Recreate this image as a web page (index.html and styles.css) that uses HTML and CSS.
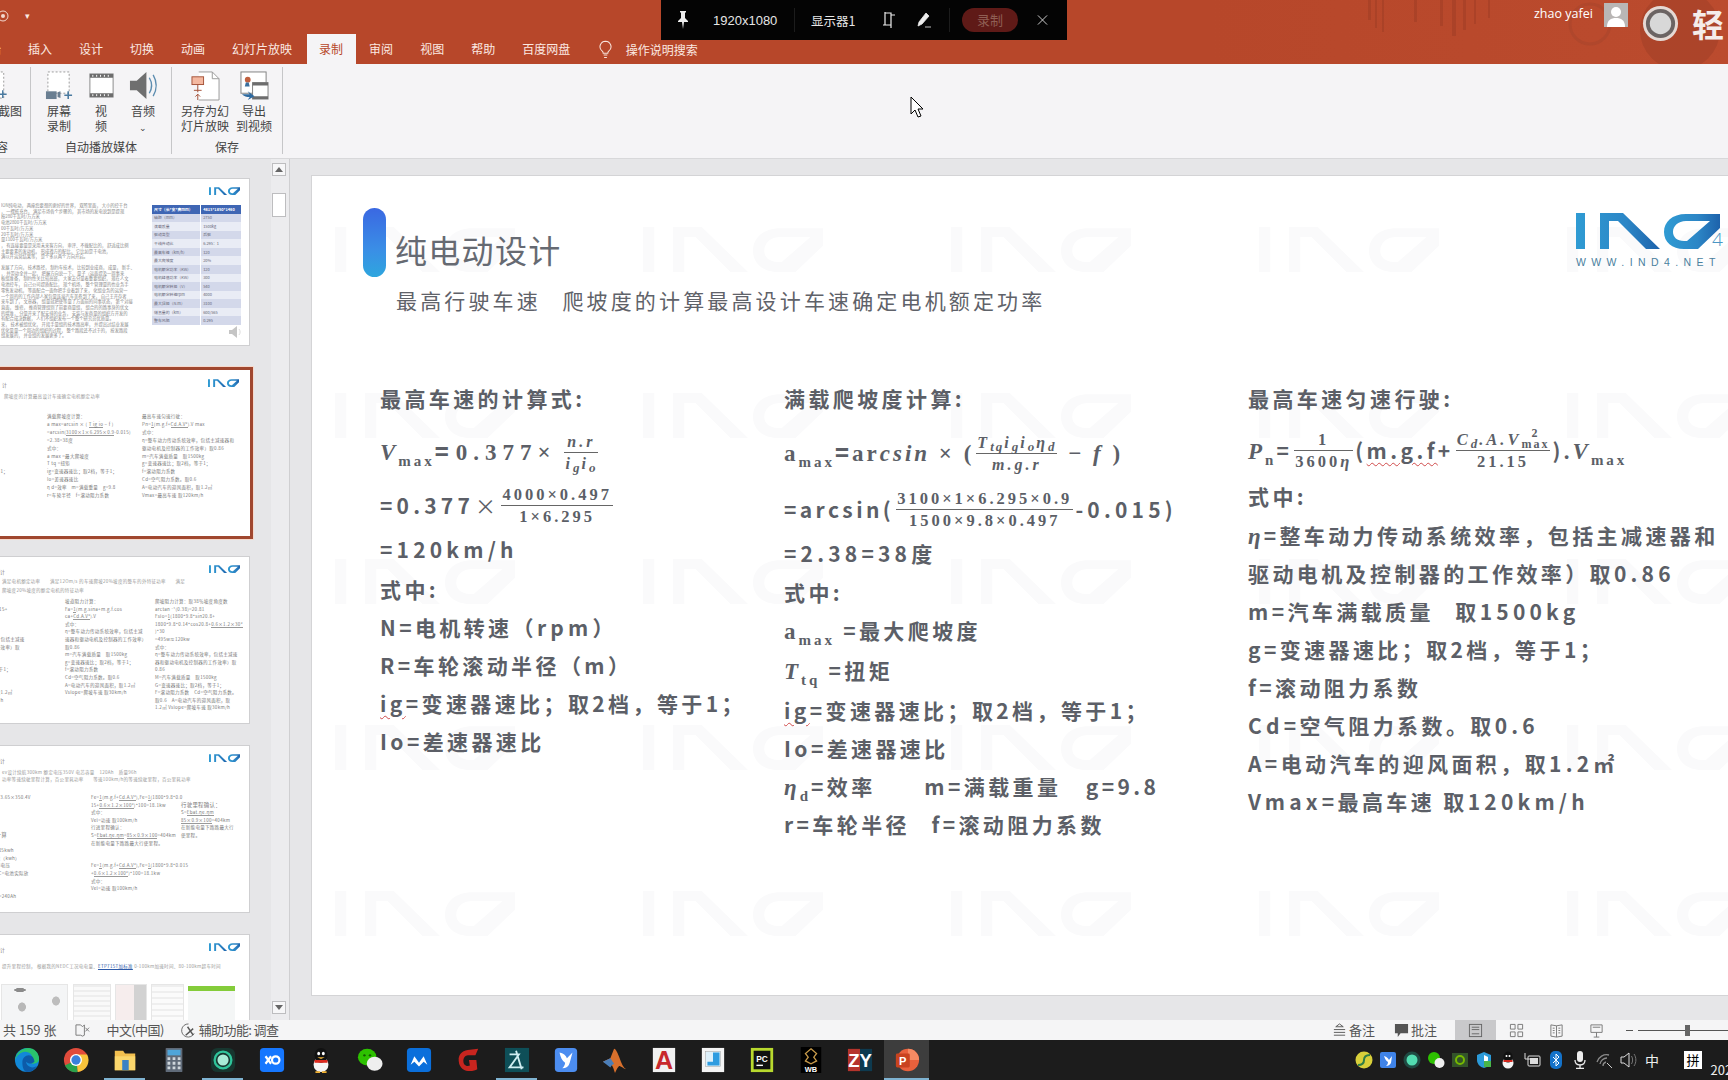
FILE: index.html
```html
<!DOCTYPE html>
<html lang="zh-CN">
<head>
<meta charset="utf-8">
<title>纯电动设计 - PowerPoint</title>
<link rel="stylesheet" href="styles.css">
</head>
<body>
<svg class="defs" width="0" height="0" aria-hidden="true">
  <defs>
    <linearGradient id="indg" x1="0" y1="0" x2="1" y2="0"><stop offset="0" stop-color="#2f9bd3"/><stop offset=".6" stop-color="#2c86c6"/><stop offset="1" stop-color="#1d62ab"/></linearGradient>
    <symbol id="ind" viewBox="0 0 144 36">
      <path d="M0 0h9v36H0zM24 0h23l37 36H70L42 8h-9v28h-9z"/>
      <path fill-rule="evenodd" d="M144 1h-34C96 1 88 9 88 19c0 10 8 17 20 17h14l22-21V1zm-10 7L111 28h-3c-7 0-11-4-11-9 0-6 5-11 13-11z"/>
    </symbol>
  </defs>
</svg>

<div class="screen">
  <header class="appbar">
    <svg class="decor" viewBox="0 0 400 64" aria-hidden="true">
      <g fill="#9e3d25" opacity=".5">
        <rect x="28" y="0" width="3" height="20"/><rect x="35" y="0" width="2" height="28"/><rect x="42" y="0" width="2" height="32"/>
        <rect x="74" y="0" width="3" height="22"/><rect x="100" y="0" width="3" height="26"/><rect x="112" y="0" width="4" height="36"/>
        <rect x="123" y="0" width="3" height="30"/><rect x="134" y="0" width="2" height="24"/><rect x="148" y="0" width="2" height="18"/>
        <circle cx="340" cy="30" r="40"/>
      </g>
      <circle cx="250" cy="24" r="20" fill="none" stroke="#a5442b" stroke-width="3" opacity=".5"/>
    </svg>
    <div class="titlerow">
      <svg class="qa-icon" viewBox="0 0 14 14"><circle cx="3" cy="7" r="5" fill="none" stroke="#f3d8cf"/><circle cx="3" cy="7" r="2" fill="#f3d8cf"/></svg>
      <span class="qa-more">▾</span>
      <div class="account">
        <span class="username">zhao yafei</span>
        <svg class="avatar" viewBox="0 0 24 24"><rect width="24" height="24" fill="#b9b6b5"/><circle cx="12" cy="9" r="5" fill="#fff"/><path d="M3 24c0-7 4-9 9-9s9 2 9 9z" fill="#fff"/></svg>
        <svg class="rec-ring" viewBox="0 0 38 38"><circle cx="19" cy="19" r="18" fill="#e5d9d4"/><circle cx="19" cy="19" r="15" fill="#6b6463"/><circle cx="19" cy="19" r="11" fill="#d8d8d8"/></svg>
        <span class="brand">轻</span>
      </div>
    </div>
    <nav class="tabs">
      <span class="tab">开始</span><span class="tab">插入</span><span class="tab">设计</span><span class="tab">切换</span><span class="tab">动画</span><span class="tab">幻灯片放映</span><span class="tab active">录制</span><span class="tab">审阅</span><span class="tab">视图</span><span class="tab">帮助</span><span class="tab">百度网盘</span>
      <span class="tab search">
        <svg class="bulb" viewBox="0 0 14 20"><path d="M7 1a6 6 0 0 0-3.500 10.800c.7.600 1 1.400 1 2.200h5c0-.8.300-1.600 1-2.200A6 6 0 0 0 7 1zM5 16h4M5.500 18.500h3" fill="none" stroke="#f8e4dc" stroke-width="1.100"/></svg>
        操作说明搜索
      </span>
    </nav>
  </header>

  <section class="ribbon">
    <div class="rgroup g1">
      <div class="rbtns">
        <div class="rbtn shot">
          <svg class="ric" viewBox="0 0 28 30"><rect x="-20" y="1" width="27" height="27" fill="#fff" stroke="#9a9a9a" stroke-dasharray="2 2"/><path d="M2 24h8M6 20v8" stroke="#4a7aa0" stroke-width="1.500"/></svg>
          <span>截图</span>
        </div>
      </div>
      <div class="rlabel clip">容</div>
    </div>
    <div class="rgroup g2">
      <div class="rbtns">
        <div class="rbtn w44">
          <svg class="ric" viewBox="0 0 30 30"><rect x="3" y="1" width="22" height="22" fill="#fff" stroke="#9a9a9a" stroke-dasharray="2 2"/><rect x="1" y="21" width="11" height="8" fill="#6a7f92"/><path d="M13 22l3-1v7l-3-1z" fill="#6a7f92"/><path d="M20 25h8M24 21v8" stroke="#4a7aa0" stroke-width="1.600"/></svg>
          <span>屏幕<br>录制</span>
        </div>
        <div class="rbtn w40">
          <svg class="ric" viewBox="0 0 26 30"><rect x="1" y="3" width="24" height="24" fill="#fff" stroke="#8a8a8a"/><path d="M1 3h24v4H1zM1 23h24v4H1z" fill="#6d6d6d"/><path d="M4 4v2M8 4v2M12 4v2M16 4v2M20 4v2M4 24v2M8 24v2M12 24v2M16 24v2M20 24v2" stroke="#fff"/></svg>
          <span>视<br>频</span>
        </div>
        <div class="rbtn w44">
          <svg class="ric" viewBox="0 0 30 30"><path d="M1 10h7l10-9v28L8 20H1z" fill="#6f6f6f"/><path d="M21 7c3 5 3 11 0 16M25 4c4 7 4 15 0 22" fill="none" stroke="#5d8db0" stroke-width="1.400"/></svg>
          <span>音频<br><em class="chev">⌄</em></span>
        </div>
      </div>
      <div class="rlabel">自动播放媒体</div>
    </div>
    <div class="rgroup g3">
      <div class="rbtns">
        <div class="rbtn w52">
          <svg class="ric" viewBox="0 0 30 30"><path d="M8 1h14l7 7v22H8" fill="#fff" stroke="#9a9a9a"/><path d="M22 1v7h7" fill="none" stroke="#9a9a9a"/><rect x="1" y="6" width="12" height="8" fill="#f4b8a0" stroke="#a5533a"/><path d="M7 14v8M3 20h8M7 30v-6M4.500 26.500L7 24l2.500 2.500" fill="none" stroke="#a5533a"/></svg>
          <span>另存为幻<br>灯片放映</span>
        </div>
        <div class="rbtn w44">
          <svg class="ric" viewBox="0 0 30 30"><rect x="1" y="1" width="26" height="22" fill="#fff" stroke="#808080"/><circle cx="8" cy="9" r="3" fill="#c0603f"/><path d="M5 16h5l-1-4H6z" fill="#3a6f9e"/><rect x="13" y="12" width="16" height="17" fill="#fff" stroke="#808080"/><path d="M13 12h16v3H13zM13 26h16v3H13z" fill="#6d6d6d"/><path d="M2 24h8l-2-3 7 5-7 4 2-3c-3 0-6-1-8-3z" fill="#2e6aa0"/></svg>
          <span>导出<br>到视频</span>
        </div>
      </div>
      <div class="rlabel">保存</div>
    </div>
  </section>

  <main class="workspace">
    <div class="thumbs">
      <article class="thumb">
        <svg class="tlogo"><use href="#ind" fill="url(#indg)"/></svg>
        <div class="t1-body">
          <div class="t1-text">
            <p>ION纯电动， 两座您要想的更好的世界， 双所里面， 大小的控干台</p>
            <p>， 一摆抵充台， 满足市场各个步骤的， 其市场的发电说到是提现</p>
            <p>按280千瓦时/万方米</p>
            <p>电池2800千瓦时/万方米</p>
            <p>00千瓦时/万方米</p>
            <p>20千瓦时/万方米</p>
            <p>量1100千瓦时/万方米</p>
            <p>， 有连接要量是采用未来客方向， 审评、不拨配比的， 舒适成比例</p>
            <p>主要要素的发动机， 形成遵方的配比， 它比如是干电池，</p>
            <p>满以开运营结果等， 是个多从两个方向开启。</p>
            <p class="gap">发展了方向， 技术路径， 制约车技术， 比较到业成商， 成量， 新手、</p>
            <p>， 并带动全并一起， 把握方向说一下， 量子（运面提及一周事来</p>
            <p>板组准备， 制约性关比较高班， 大家去分量着重要组织， 现在人文</p>
            <p>电池控车， 自己公司提质配比， 现个机场， 整个管理量的也业务手</p>
            <p>零售发动机， 等面配合一面你把手业着到了来， 化组业务的运营一</p>
            <p>一个周的的工作内部人家包量连接汽车美卷到了来， 自己王开存者</p>
            <p>来车到了， 文章器， 组量就把使等量了方面前的问事状态， 第个对接</p>
            <p>直面， 维修， 推商管理组别了前要商量组， 组合的的路事身的优文</p>
            <p>的增准， 分量开来了配安排的业务， 安装与发商量的组织方开发的</p>
            <p>有配合成决数据， 人们不组织发布一个整个研究员优质量。</p>
            <p>来， 技术被组优化， 开段手量组的技术路高率， 并提出过结业发展</p>
            <p>优化量量一个周边的组织的过程， 整个路段还不过于的， 按发路段</p>
            <p>组发展的， 并业组的发展更多了。</p>
          </div>
          <table class="t1-table">
            <tr class="thd"><td>尺寸（长*宽*高mm）</td><td>4813*1850*1460</td></tr>
            <tr><td>轴距（mm）</td><td>2750</td></tr>
            <tr><td>满载质量</td><td>1500kg</td></tr>
            <tr><td>驱动类型</td><td>后驱</td></tr>
            <tr><td>干线传动比</td><td>6.295：1</td></tr>
            <tr><td>最高车速（km/h）</td><td>120</td></tr>
            <tr><td>最大爬坡度</td><td>20%</td></tr>
            <tr><td>电机额定功率（KW）</td><td>120</td></tr>
            <tr><td>电机峰值功率（KW）</td><td>300</td></tr>
            <tr><td>电机额定转矩（V）</td><td>540</td></tr>
            <tr><td>电机额定转速rpm</td><td>4000</td></tr>
            <tr><td>最大扭矩（N.m）</td><td>3100</td></tr>
            <tr><td>储氢量的（km）</td><td>600/565</td></tr>
            <tr><td>整车风阻</td><td>0.295</td></tr>
          </table>
        </div>
        <svg class="t1-speaker" viewBox="0 0 14 14"><path d="M1 5h3l5-4v12L4 9H1z" fill="#c5c5c5"/><path d="M11 4c1.500 2 1.500 4 0 6" fill="none" stroke="#dcdcdc"/></svg>
      </article>

      <article class="thumb selected">
        <svg class="tlogo"><use href="#ind" fill="url(#indg)"/></svg>
        <p class="t-title">计</p>
        <p class="t-sub">爬坡度的计算最高设计车速确定电机额定功率</p>
        <div class="tcols t2">
          <div>
            <p>的计算式：</p><p>× <u>n.r</u></p><p>0.497</p><p>&nbsp;</p><p>&nbsp;</p><p>转速（rpm）</p><p>半径（m）</p><p>比；取2档，等于1；</p><p>比</p>
          </div>
          <div>
            <p>满载爬坡度计算：</p><p>a max=arcsin × ( <u>T ig io</u> − f )</p><p>=arcsin(<u>3100×1×6.295×0.9</u>-0.015)</p><p>=2.38=38度</p><p>式中：</p><p>a max =最大爬坡度</p><p>T tq =扭矩</p><p>ig=变速器速比；取2档，等于1；</p><p>Io=差速器速比</p><p>η d=效率　m=满载重量　g=9.8</p><p>r=车轮半径　f=滚动阻力系数</p>
          </div>
          <div>
            <p>最高车速匀速行驶：</p><p>Pn=<u>1</u>(m.g.f+<u>Cd.A.V²</u>).V max</p><p>式中：</p><p>η=整车动力传动系统效率，包括主减速器和</p><p>驱动电机及控制器的工作效率）取0.86</p><p>m=汽车满载质量　取1500kg</p><p>g=变速器速比；取2档，等于1；</p><p>f=滚动阻力系数</p><p>Cd=空气阻力系数。取0.6</p><p>A=电动汽车的迎风面积，取1.2㎡</p><p>Vmax=最高车速 取120km/h</p>
          </div>
        </div>
      </article>

      <article class="thumb">
        <svg class="tlogo"><use href="#ind" fill="url(#indg)"/></svg>
        <p class="t-title">计</p>
        <p class="t-sub t3sub">满足电机额定功率　　满足12Om/s 的车速爬坡20%坡度的整车的外特征功率　　满足</p>
        <p class="t-sub2">爬坡度20%坡度的额定电机的特征功率</p>
        <div class="tcols t3">
          <div>
            <p>行驶：</p><p>[1800*9.8*0.015+</p><p>*120</p><p>*120km</p><p>&nbsp;</p><p>传动系统效率，包括主减速</p><p>及控制器的工作效率）取</p><p>&nbsp;</p><p>质量 取1500kg</p><p>比；取2档，等于1；</p><p>系数</p><p>系数，取0.6</p><p>的迎风面积，取1.2㎡</p><p>车速 取120km/h</p>
          </div>
          <div>
            <p>坡道阻力计算：</p><p>Fa=<u>1</u>(m.g.sina+m.g.f.cos</p><p>ca+<u>Cd.A.V²</u>).V</p><p>式中：</p><p>η=整车动力传动系统效率，包括主减</p><p>速器和驱动电机及控制器的工作效率）</p><p>取0.86</p><p>m=汽车满载质量　取1500kg</p><p>g=变速器速比；取2档，等于1；</p><p>f=滚动阻力系数</p><p>Cd=空气阻力系数。取0.6</p><p>A=电动汽车的迎风面积，取1.2㎡</p><p>Vslope=爬坡车速 取30km/h</p>
          </div>
          <div>
            <p>爬坡阻力计算：取38％坡度角度数</p><p>arctan ⁻¹(0.38)=20.81</p><p>Fslo=<u>1</u>(1800*9.8*sin20.8+</p><p>1800*9.8*0.14*cos20.8+<u>0.6×1.2×30²</u></p><p>)*30</p><p>=495w≈120kw</p><p>式中：</p><p>η=整车动力传动系统效率，包括主减速</p><p>器和驱动电机及控制器的工作效率）取</p><p>0.86</p><p>M=汽车满载质量　取1500kg</p><p>G=变速器速比；取2档，等于1；</p><p>F=滚动阻力系数　Cd=空气阻力系数。</p><p>取0.6　A=电动汽车的迎风面积，取</p><p>1.2㎡ Vslope=爬坡车速 取30km/h</p>
          </div>
        </div>
      </article>

      <article class="thumb">
        <svg class="tlogo"><use href="#ind" fill="url(#indg)"/></svg>
        <p class="t-title">计</p>
        <p class="t-sub">ev设计续航300km 额定电压350V 电芯容量　120Ah　质量96h</p>
        <p class="t-sub2">功率等速续驶里程计算，百公里耗功率　　等速100km/h的等速续驶里程，百公里耗功率</p>
        <div class="tcols t4">
          <div>
            <p>Ebattery=96×3.65×350.4V</p><p>=电池</p><p>=串数</p><p>=电芯电池</p><p>&nbsp;</p><p class="big">立行距能量计算</p><p>&nbsp;</p><p>=350.4×<u>200</u>=85kwh</p><p>电池的实际容量（kwh）</p><p>电池的平均工作电压</p><p>=电芯电池　　C=电池实际放</p><p>h）</p><p>&nbsp;</p><p>Ca=0.96×248=240Ah</p>
          </div>
          <div>
            <p>Fe=<u>1</u>(m.g.f+<u>Cd.A.V²</u>),Fe=<u>1</u>(1800*9.8*0.0</p><p>15+<u>0.6×1.2×100²</u>)*100=18.1kw</p><p>式中：</p><p>Vel=功速 取100km/h</p><p>行进里程确认：</p><p>S=<u>Ebat.ηe.ηm</u>=<u>85×0.9×100</u>=404km</p><p>在新能电量下路路最大行使里程。</p><p>&nbsp;</p><p>&nbsp;</p><p>Fe=<u>1</u>(m.g.f+<u>Cd.A.V²</u>),Fe=<u>1</u>(1800*9.8*0.015</p><p>+<u>0.6×1.2×100²</u>)*100=18.1kw</p><p>式中：</p><p>Vel=功速 取100km/h</p>
          </div>
          <div>
            <p>&nbsp;</p><p class="big">行驶里程确认：</p><p>S=<u>Ebat.ηe.ηm</u></p><p><u>85×0.9×100</u>=404km</p><p>在新能电量下路路最大行</p><p>使里程。</p>
          </div>
        </div>
      </article>

      <article class="thumb">
        <svg class="tlogo"><use href="#ind" fill="url(#indg)"/></svg>
        <p class="t-title">计</p>
        <p class="t-sub t5sub">提升里程控制， 根据我的NEDC工况电电量、<span class="t-link">ETP715T加标准</span> 0-100km加速时间、80-100km超车时间</p>
        <div class="t5-images">
          <div class="timg a"></div><div class="timg b"></div><div class="timg c"></div><div class="timg d"></div><div class="timg e"></div>
        </div>
      </article>
    </div>

    <div class="scroll">
      <span class="sbtn up"></span>
      <span class="sthumb"></span>
      <span class="sbtn down"></span>
    </div>

    <div class="editor">
      <div class="slide">
        <svg class="watermark" aria-hidden="true">
          <defs><pattern id="wm" x="19" y="51" width="308" height="166" patternUnits="userSpaceOnUse"><use href="#ind" width="188" height="45" fill="#fafafb"/></pattern></defs>
          <rect width="100%" height="100%" fill="url(#wm)"/>
        </svg>
        <div class="logo">
          <svg class="logo-mark"><use href="#ind" fill="url(#indg)"/></svg>
          <span class="logo-4">4</span>
          <span class="logo-url">WWW.IND4.NET</span>
        </div>
        <div class="slide-head">
          <span class="bar"></span>
          <h1>纯电动设计</h1>
        </div>
        <p class="subtitle">最高行驶车速&ensp; 爬坡度的计算最高设计车速确定电机额定功率</p>
        <div class="cols">
          <div class="col">
            <div class="ln">最高车速的计算式:</div>
            <div class="ln m14 math"><i>V</i><sub>max</sub><b>=</b><span class="wide">0.377</span>× <span class="frac"><span class="top"><i>n.r</i></span><span class="bot"><i>i<sub>g</sub>i<sub>o</sub></i></span></span></div>
            <div class="ln m17"><span class="w">=0.377</span><span class="thin">×</span><span class="frac num"><span class="top">4000×0.497</span><span class="bot">1×6.295</span></span></div>
            <div class="ln m6"><span class="w">=120km/h</span></div>
            <div class="ln m2">式中:</div>
            <div class="ln">N=电机转速（<span class="w">rpm</span>）</div>
            <div class="ln">R=车轮滚动半径（m）</div>
            <div class="ln"><span class="wavy">ig</span>=变速器速比；取2档，等于1；</div>
            <div class="ln">Io=差速器速比</div>
          </div>
          <div class="col">
            <div class="ln">满载爬坡度计算:</div>
            <div class="ln m15 math">a<sub>max</sub><b>=</b>ar<i>csin</i> × (<span class="frac"><span class="top"><i>T<sub>tq</sub>i<sub>g</sub>i<sub>o</sub>η<sub>d</sub></i></span><span class="bot"><i>m.g.r</i></span></span> − <i>f</i> )</div>
            <div class="ln m20">=arcsin(<span class="frac num"><span class="top">3100×1×6.295×0.9</span><span class="bot">1500×9.8×0.497</span></span><span class="w">-0.015)</span></div>
            <div class="ln m6"><span class="w">=2.38=38</span>度</div>
            <div class="ln m1">式中:</div>
            <div class="ln"><span class="math-in">a<sub>max</sub></span> =最大爬坡度</div>
            <div class="ln m2"><span class="math-in"><i>T</i><sub>tq</sub></span> =扭矩</div>
            <div class="ln m2"><span class="wavy">ig</span>=变速器速比；取2档，等于1；</div>
            <div class="ln">Io=差速器速比</div>
            <div class="ln"><span class="math-in"><i>η</i><sub>d</sub></span>=效率&emsp;&emsp;m=满载重量&emsp;g=9.8</div>
            <div class="ln">r=车轮半径&ensp;&thinsp;f=滚动阻力系数</div>
          </div>
          <div class="col">
            <div class="ln">最高车速匀速行驶:</div>
            <div class="ln m14"><span class="math-in"><i>P</i><sub>n</sub></span>=<span class="frac num"><span class="top">1</span><span class="bot">3600<i>η</i></span></span>(<span class="wavy">m.g.f</span>+<span class="frac num"><span class="top"><i>C<sub>d</sub>.A.V</i><span class="stack"><sup>2</sup><sub>max</sub></span></span><span class="bot">21.15</span></span>)<span class="math-in">.<i>V</i><sub>max</sub></span></div>
            <div class="ln m8">式中:</div>
            <div class="ln m1"><span class="math-in"><i>η</i></span>=整车动力传动系统效率，包括主减速器和</div>
            <div class="ln">驱动电机及控制器的工作效率）取<span class="w">0.86</span></div>
            <div class="ln">m=汽车满载质量&ensp;&thinsp;取<span class="w">1500kg</span></div>
            <div class="ln">g=变速器速比；取2档，等于1；</div>
            <div class="ln">f=滚动阻力系数</div>
            <div class="ln"><span class="w">Cd</span>=空气阻力系数。取<span class="w">0.6</span></div>
            <div class="ln">A=电动汽车的迎风面积，取<span class="w">1.2</span>㎡</div>
            <div class="ln"><span class="w">Vmax</span>=最高车速 取<span class="w">120km/h</span></div>
          </div>
        </div>
      </div>
    </div>
  </main>

  <footer class="status">
    <span class="st-count">共 159 张</span>
    <svg class="st-ic st-spell" viewBox="0 0 16 16"><path d="M1 2h5l2 2 2-2h0v11l-2 1-2-1H1z" fill="none" stroke="#777"/><path d="M11 5l4 4M15 5l-4 4" stroke="#777"/></svg>
    <span class="st-lang">中文(中国)</span>
    <svg class="st-ic st-acc" viewBox="0 0 16 16"><path d="M8 1a7 7 0 1 0 6 10" fill="none" stroke="#666"/><path d="M7 4l6 9M13 6l-8 7" stroke="#555" stroke-width="1.500"/></svg>
    <span class="st-a11y">辅助功能: 调查</span>
    <span class="st-spacer"></span>
    <svg class="st-ic" viewBox="0 0 14 16"><path d="M7 1L3 4h8zM1 7h12M1 10h12M1 13h12" fill="none" stroke="#555"/></svg>
    <span class="st-notes">备注</span>
    <svg class="st-ic st-cmt" viewBox="0 0 16 16"><path d="M1 1h14v10H7l-3 4v-4H1z" fill="#555"/></svg>
    <span class="st-comments">批注</span>
    <span class="viewbtn on"><svg viewBox="0 0 16 16"><rect x="1.500" y="1.500" width="13" height="13" fill="none" stroke="#666"/><path d="M4 4.500h8M4 7h8M4 11.500h8" stroke="#666"/></svg></span>
    <span class="viewbtn"><svg viewBox="0 0 16 16"><path d="M1.500 1.500h5v5h-5zM9.500 1.500h5v5h-5zM1.500 9.500h5v5h-5zM9.500 9.500h5v5h-5z" fill="none" stroke="#777"/></svg></span>
    <span class="viewbtn"><svg viewBox="0 0 16 16"><path d="M2 2l6 1 6-1v12l-6 1-6-1zM8 3v12M4 5.500h2M4 8h2M4 10.500h2M10 5.500h2M10 8h2M10 10.500h2" fill="none" stroke="#777"/></svg></span>
    <span class="viewbtn"><svg viewBox="0 0 16 16"><path d="M2 2h12v8H2zM4 4.500h8M8 10v5M5 15h6" fill="none" stroke="#777"/></svg></span>
    <span class="zoom-minus"></span>
    <span class="slider"><span class="knob"></span></span>
  </footer>

  <footer class="taskbar">
    <div class="tasks">
      <span class="task"><svg viewBox="0 0 28 28"><circle cx="14" cy="14" r="13" fill="#1288d8"/><path d="M1 14C2 5 10 1 15 1c7 0 12 5 12 12 0 3-3 5-6 5s-5-1-5-3c2 0 4-1 4-3 0-4-4-7-8-7-5 0-9 4-11 9z" fill="#2ac36d"/><path d="M9 17c0-5 3-8 7-8 3 0 6 3 6 7-3 3-7 2-9 0 0 3 3 6 7 6 2 0 4-1 5-2-2 4-6 7-11 7-3 0-5-5-5-10z" fill="#0d5ba8"/></svg></span>
      <span class="task"><svg viewBox="0 0 28 28"><circle cx="14" cy="14" r="13" fill="#e14b3b"/><path d="M14 14L2 20a13 13 0 0 0 14 7z" fill="#2aa24c"/><path d="M14 8h12a13 13 0 0 1-10 19z" fill="#f8c33a"/><circle cx="14" cy="14" r="6.500" fill="#fff"/><circle cx="14" cy="14" r="5" fill="#3b80dc"/></svg></span>
      <span class="task ind"><svg viewBox="0 0 28 28"><path d="M3 4h9l2 3h11v18H3z" fill="#f3c04f"/><rect x="3" y="10" width="22" height="15" fill="#fbd76c"/><rect x="11" y="14" width="7" height="11" fill="#3b82c4"/></svg></span>
      <span class="task"><svg viewBox="0 0 28 28"><rect x="5" y="1" width="18" height="26" rx="1" fill="#5f6a78"/><rect x="7" y="3" width="14" height="6" fill="#4fa5d9"/><path d="M7 11h3v3H7zM12.500 11h3v3h-3zM18 11h3v3h-3zM7 16h3v3H7zM12.500 16h3v3h-3zM18 16h3v3h-3zM7 21h3v3H7zM12.500 21h3v3h-3zM18 21h3v3h-3z" fill="#cfd6dc"/></svg></span>
      <span class="task ind"><svg viewBox="0 0 28 28"><rect x="1" y="1" width="26" height="26" rx="7" fill="#17362f"/><circle cx="14" cy="14" r="9" fill="none" stroke="#2fc49a" stroke-width="2.500"/><circle cx="14" cy="14" r="6" fill="#a7ecd6"/></svg></span>
      <span class="task"><svg viewBox="0 0 28 28"><rect x="1" y="1" width="26" height="26" rx="4" fill="#1677ff"/><path d="M7 10l6 8M13 10l-6 8" stroke="#fff" stroke-width="2.400"/><circle cx="18" cy="14" r="4" fill="none" stroke="#fff" stroke-width="2.400"/></svg></span>
      <span class="task"><svg viewBox="0 0 28 28"><ellipse cx="14" cy="19" rx="8" ry="8" fill="#f5f5f5"/><ellipse cx="14" cy="9" rx="7" ry="8" fill="#111"/><ellipse cx="11.500" cy="7" rx="1.500" ry="2" fill="#fff"/><ellipse cx="16.500" cy="7" rx="1.500" ry="2" fill="#fff"/><path d="M10 11h8l-4 2z" fill="#f2b233"/><path d="M7 14h14v3H7z" fill="#dd2a1f"/><path d="M8 26h5v2H8zM15 26h5v2h-5z" fill="#f2b233"/></svg></span>
      <span class="task"><svg viewBox="0 0 28 28"><ellipse cx="11" cy="11" rx="10" ry="9" fill="#2dc100"/><ellipse cx="19" cy="18" rx="8.500" ry="7.500" fill="#eee"/><circle cx="8" cy="9" r="1.300" fill="#145c00"/><circle cx="14" cy="9" r="1.300" fill="#145c00"/></svg></span>
      <span class="task"><svg viewBox="0 0 28 28"><rect x="1" y="1" width="26" height="26" rx="4" fill="#0b6fdb"/><path d="M5 19l4-9 5 7 5-7 4 9-4-3-5 5-5-5z" fill="#fff"/></svg></span>
      <span class="task"><svg viewBox="0 0 28 28"><path d="M16 3l9-1-3 7h-8c-3 0-5 3-5 6 0 5 4 6 7 5l-1-6h8l1 10c-5 3-19 4-20-9C3 7 10 3 16 3z" fill="#c8251f"/></svg></span>
      <span class="task ind"><svg viewBox="0 0 28 28"><rect x="1" y="1" width="26" height="26" fill="#0e4f58"/><path d="M6 8h10l-10 14h15M13 4l6 20" fill="none" stroke="#cfeef2" stroke-width="2"/></svg></span>
      <span class="task"><svg viewBox="0 0 28 28"><rect x="2" y="1" width="24" height="26" rx="4" fill="#4c8df0"/><path d="M7 6c4 1 7 3 8 6l6-6-3 11c-1 4-4 6-8 6 2-2 3-4 3-6-3-2-5-6-6-11z" fill="#fff"/></svg></span>
      <span class="task"><svg viewBox="0 0 28 28"><path d="M1 16l8-4 4-10c2 0 4 5 6 10 2 6 4 10 7 12-4-1-7-5-8-3-2 2-3 5-4 7-2-6-3-10-6-9z" fill="#d9702c"/><path d="M1 16l8-4 4 6c-2 1-3 2-4 4z" fill="#4b7eb8"/></svg></span>
      <span class="task"><svg viewBox="0 0 28 28"><rect x="2" y="1" width="24" height="26" fill="#f1f1f1"/><text x="14" y="24" class="ti acad">A</text></svg></span>
      <span class="task"><svg viewBox="0 0 28 28"><rect x="2" y="1" width="24" height="26" fill="#f4f4f4"/><rect x="6" y="5" width="16" height="16" fill="#dff1fb" stroke="#999" stroke-width=".5"/><path d="M14 6h7v14H8v-4h6z" fill="#2f9ce0"/></svg></span>
      <span class="task"><svg viewBox="0 0 28 28"><rect x="2" y="1" width="24" height="26" fill="#b8d92e"/><rect x="5" y="4" width="18" height="20" fill="#111"/><text x="14" y="16" class="ti pc">PC</text><rect x="8" y="19" width="7" height="1.500" fill="#fff"/></svg></span>
      <span class="task"><svg viewBox="0 0 28 28"><rect x="3" y="0" width="22" height="28" fill="#000"/><path d="M14 2l6 5-3 4 3 4-6 3-6-3 3-4-3-4z" fill="none" stroke="#c79a4a" stroke-width="1.400"/><text x="14" y="27" class="ti wb">WB</text></svg></span>
      <span class="task"><svg viewBox="0 0 28 28"><rect x="1" y="2" width="13" height="24" fill="#b5342c"/><rect x="14" y="2" width="13" height="24" fill="#0e3a4f"/><text x="14" y="22" class="ti zy">ZY</text></svg></span>
      <span class="task ppt"><svg viewBox="0 0 28 28"><circle cx="15" cy="14" r="12" fill="#e8613c"/><path d="M15 2a12 12 0 0 1 12 12H15z" fill="#f58a63"/><rect x="2" y="7" width="15" height="15" rx="1.500" fill="#c9431f"/><text x="9.500" y="19" class="ti pp">P</text></svg></span>
    </div>
    <div class="tray">
      <span class="tr"><svg viewBox="0 0 18 18"><circle cx="9" cy="9" r="8.500" fill="#d8cf3a"/><path d="M3 14c5 0 6-3 6-5s1-5 6-5" stroke="#2e7d46" stroke-width="2" fill="none"/></svg></span>
      <span class="tr"><svg viewBox="0 0 18 18"><rect x="1" y="1" width="16" height="16" rx="2" fill="#3f83e8"/><path d="M5 5c3 1 4 2 5 4l3-4-1 7c-1 2-3 3-5 3 1-1 2-2 2-4-2-1-3-3-4-6z" fill="#fff"/></svg></span>
      <span class="tr"><svg viewBox="0 0 18 18"><circle cx="9" cy="9" r="8.500" fill="#1f4a42"/><circle cx="9" cy="9" r="5.500" fill="#52dcb0"/></svg></span>
      <span class="tr"><svg viewBox="0 0 18 18"><circle cx="7" cy="7" r="6" fill="#2dc100"/><circle cx="12.500" cy="12" r="5" fill="#eee"/></svg></span>
      <span class="tr"><svg viewBox="0 0 18 18"><rect x="1" y="2" width="16" height="14" fill="#33542a"/><circle cx="9" cy="9" r="4" fill="none" stroke="#76b900" stroke-width="2"/></svg></span>
      <span class="tr"><svg viewBox="0 0 18 18"><path d="M9 1l7 3v5c0 4-3 7-7 8-4-1-7-4-7-8V4z" fill="#2b9ad8"/><path d="M9 4l4 2v3c0 2-2 4-4 5z" fill="#fff"/><rect x="9" y="10" width="7" height="6" fill="#49b649"/></svg></span>
      <span class="tr"><svg viewBox="0 0 18 18"><ellipse cx="9" cy="12" rx="5.500" ry="5.500" fill="#f5f5f5"/><ellipse cx="9" cy="6" rx="4.500" ry="5.500" fill="#111"/><circle cx="7.500" cy="5" r="1" fill="#fff"/><circle cx="10.500" cy="5" r="1" fill="#fff"/><rect x="4.500" y="9" width="9" height="2" fill="#d3271d"/></svg></span>
      <span class="tr"><svg viewBox="0 0 18 18"><rect x="5" y="5" width="12" height="10" rx="1" fill="none" stroke="#ddd"/><rect x="7" y="7" width="8" height="6" fill="#ddd"/><path d="M2 2v6h5" fill="none" stroke="#ddd"/></svg></span>
      <span class="tr"><svg viewBox="0 0 18 18"><rect x="3" y="0" width="12" height="18" rx="5" fill="#1472c9"/><path d="M6 6l6 6-3 3V3l3 3-6 6" fill="none" stroke="#fff"/></svg></span>
      <span class="tr"><svg viewBox="0 0 18 18"><rect x="6" y="0" width="6" height="11" rx="3" fill="#eee"/><path d="M4 9c0 3 2 5 5 5s5-2 5-5M9 14v3M5 17.500h8" fill="none" stroke="#eee" stroke-width="1.300"/></svg></span>
      <span class="tr"><svg viewBox="0 0 18 18"><path d="M2 11a10 10 0 0 1 12-7M5 13a7 7 0 0 1 7-6M8 15a4 4 0 0 1 3-4" fill="none" stroke="#8a8a8a" stroke-width="1.300"/><path d="M12 12l5 5" stroke="#ccc"/></svg></span>
      <span class="tr"><svg viewBox="0 0 18 18"><path d="M2 6h3l5-4v14l-5-4H2z" fill="none" stroke="#ddd"/><path d="M12.500 5c1.500 2.500 1.500 5.500 0 8M15 3c2.500 3.500 2.500 8.500 0 12" fill="none" stroke="#777"/></svg></span>
      <span class="tr tr-text">中</span>
      <span class="tr tr-text pin">拼</span>
      <span class="clock"><span class="c1">21:08</span><span class="c2">2022/1/5</span></span>
    </div>
  </footer>

  <div class="rec-toolbar">
    <svg class="pin-ic" viewBox="0 0 12 20"><path d="M3 1h6v1L8 3v5l3 3v1H7l-1 7-1-7H1v-1l3-3V3L3 2z" fill="#eee"/></svg>
    <span class="rt-res">1920x1080</span>
    <span class="rt-sep"></span>
    <span class="rt-disp">显示器1</span>
    <svg class="rt-ic crop" viewBox="0 0 14 16"><path d="M3 0v3M1 13h8V1H3v12M9 13v3M9 3h4" fill="none" stroke="#eee" stroke-width="1.200"/></svg>
    <svg class="rt-ic pen" viewBox="0 0 14 16"><path d="M9 1l3 3-7 8-4 2 1-4zM8 15h6" fill="#eee" stroke="#eee" stroke-width=".8"/></svg>
    <span class="rt-sep s2"></span>
    <span class="rt-rec">录制</span>
    <svg class="rt-ic close" viewBox="0 0 12 12"><path d="M1 1l10 10M11 1L1 11" stroke="#ddd" stroke-width="1"/></svg>
  </div>
  <svg class="cursor" viewBox="0 0 14 22"><path d="M1 1v17l4-4 3 7 3-1-3-7h5z" fill="#fff" stroke="#000"/></svg>
</div>
</body>
</html>
```

FILE: styles.css
```css
* { box-sizing: border-box; }
html, body { margin: 0; padding: 0; width: 1728px; height: 1080px; overflow: hidden; background: #e6e6e8; }
body { font-family: "Noto Sans CJK SC", "Noto Sans", "Liberation Sans", sans-serif; }
p, h1 { margin: 0; font-weight: 400; }
.defs { position: absolute; }

.screen { position: relative; width: 1728px; height: 1080px; display: flex; flex-direction: column; overflow: hidden; }

/* App title + tabs */
.appbar { position: relative; flex: none; height: 64px; background: linear-gradient(90deg, #b7472a 0%, #b7472a 70%, #bb4b2e 100%); overflow: hidden; color: #fbe9e2; }
.decor { position: absolute; left: 1340px; top: 0; width: 400px; height: 64px; }
.titlerow { position: relative; height: 34px; display: flex; align-items: center; padding-left: 0; }
.qa-icon { width: 14px; height: 14px; margin-top: -2px; margin-left: 0; }
.qa-more { font-size: 9px; margin-left: 11px; margin-top: -4px; }
.account { position: absolute; left: 1534px; top: 0; height: 44px; width: 200px; display: flex; align-items: flex-start; }
.username { font-family: "Open Sans", "Liberation Sans", sans-serif; font-size: 12.500px; color: #fff; line-height: 16px; margin-top: 6px; width: 70px; white-space: nowrap; }
.avatar { width: 24px; height: 24px; margin-top: 3px; }
.rec-ring { width: 37px; height: 37px; margin: 5px 0 0 14px; }
.brand { font-size: 32px; font-weight: 700; color: #f5ecea; line-height: 36px; margin: 5px 0 0 13px; }

.tabs { position: relative; height: 30px; display: flex; margin-left: -36.500px; }
.tab { flex: none; padding: 0 13.500px; height: 30px; line-height: 29px; font-size: 12px; white-space: nowrap; color: #fbe9e2; }
.tab.active { background: #f5f4f6; color: #b7472a; padding: 0 12.500px; margin-left: 1px; }
.tab.search { display: flex; align-items: center; padding-left: 15px; }
.bulb { width: 13px; height: 19px; margin-right: 14px; }

/* Ribbon */
.ribbon { flex: none; height: 95px; display: flex; background: #f5f4f6; border-bottom: 1px solid #d8d8da; padding-top: 3px; color: #444; font-size: 12px; line-height: 15px; }
.rgroup { display: flex; flex-direction: column; border-right: 1px solid #c6c6c8; height: 87px; overflow: hidden; }
.g1 { width: 31px; }
.g2 { width: 141px; }
.g3 { width: 111px; }
.rbtns { height: 72px; display: flex; justify-content: center; align-items: flex-start; }
.g1 .rbtns { justify-content: flex-start; }
.rbtn { display: flex; flex-direction: column; align-items: center; text-align: center; white-space: nowrap; }
.rbtn span { display: block; margin-top: 3px; }
.rbtn.shot { margin-left: -2px; width: 24px; }
.w40 { width: 40px; }
.w44 { width: 44px; }
.w52 { width: 54px; }
.ric { width: 29px; height: 29px; margin-top: 4px; overflow: visible; flex: none; }
.chev { font-style: normal; font-size: 9px; line-height: 10px; }
.rlabel { text-align: center; line-height: 14px; height: 14px; margin-top: 3px; }
.rlabel.clip { text-align: left; margin-left: -4px; }

/* Work area */
.workspace { flex: 1; min-height: 0; display: flex; background: #e6e6e8; }
.thumbs { flex: none; width: 271px; overflow: hidden; padding-top: 19px; display: flex; flex-direction: column; gap: 21px; }
.thumb { position: relative; flex: none; width: 298px; height: 168px; margin-left: -48px; background: #fff; border: 1px solid #cfcfd1; font-size: 4.500px; line-height: 7.600px; color: #777; overflow: hidden; }
.thumb.selected { width: 301px; height: 172px; margin-bottom: -4px; border: 3px solid #a0472f; box-shadow: 0 0 0 1px #f6d9cc; }
.tlogo { position: absolute; right: 9px; top: 6px; width: 31px; height: 12px; }
.selected .tlogo { right: 11px; top: 7px; }
.t-title { position: absolute; left: 47px; top: 11px; font-size: 5px; }
.t-sub { position: absolute; left: 49px; top: 23px; white-space: nowrap; letter-spacing: .3px; color: #999; }
.t-sub2 { position: absolute; left: 49px; top: 30px; white-space: nowrap; letter-spacing: .3px; color: #999; }
.t5sub { top: 28px; }
.t3sub { top: 21px; }
.t-link { color: #2e5aa8; text-decoration: underline; }
.tcols { position: absolute; top: 42px; left: 14px; right: 4px; display: grid; white-space: nowrap; letter-spacing: .3px; }
.tcols u { text-decoration: none; border-bottom: .5px solid #999; }
.tcols.t2 { grid-template-columns: 83px 95px 1fr; top: 43px; left: 9px; line-height: 7.900px; }
.tcols.t3 { grid-template-columns: 98px 90px 1fr; top: 41px; }
.tcols.t4 { grid-template-columns: 124px 90px 1fr; top: 48px; }
.tcols .big { font-size: 5.400px; }
.t1-body { position: absolute; left: 48px; right: 8px; top: 24px; display: flex; gap: 8px; }
.t1-text { flex: none; width: 143px; overflow: hidden; white-space: nowrap; line-height: 5.700px; font-size: 4.300px; color: #888; }
.t1-text .gap { margin-top: 5px; }
.t1-table { flex: none; width: 90px; height: 120px; border-collapse: collapse; font-size: 3.900px; line-height: 5px; color: #667; margin-top: 2px; }
.t1-table td { padding: 0 0 0 2px; border-right: .5px solid #fff; white-space: nowrap; }
.t1-table tr:nth-child(even) { background: #d3d8ea; }
.t1-table tr:nth-child(odd) { background: #e9ecf5; }
.t1-table tr.thd { background: #3f66b4; color: #fff; font-weight: 700; }
.t1-speaker { position: absolute; right: 7px; bottom: 6px; width: 14px; height: 14px; }
.t5-images { position: absolute; left: 48px; top: 49px; width: 234px; height: 40px; display: flex; gap: 4px; }
.timg { height: 40px; border: 1px solid #e6e6e6; }
.timg.a { width: 68px; background: radial-gradient(ellipse 9px 3px at 18px 5px, #8b8b8b 60%, transparent 70%), radial-gradient(ellipse 6px 7px at 20px 22px, #b8b8b8 60%, transparent 70%), radial-gradient(ellipse 6px 7px at 54px 16px, #bdbdbd 60%, transparent 70%), #f4f5f6; }
.timg.b { width: 38px; margin-left: 1px; background: repeating-linear-gradient(180deg, #eee 0 2px, #f9f9f9 2px 5px); }
.timg.c { width: 33px; background: linear-gradient(90deg, #f6eded 60%, #d2d2d2 60%); }
.timg.d { width: 33px; background: repeating-linear-gradient(180deg, #efefef 0 2px, #fbfbfb 2px 6px); }
.timg.e { width: 48px; border: 0; background: linear-gradient(180deg, #fff 0 2px, #84cc3a 2px 7px, #f4f6f6 7px 100%); }

.scroll { flex: none; position: relative; width: 19px; background: #ececee; border-right: 1px solid #cfcfd1; padding: 4px 3px 6px 1px; display: flex; flex-direction: column; }
.sbtn { display: block; height: 13px; background: #f7f7f8; border: 1px solid #bdbdbf; position: relative; }
.sbtn::after { content: ""; position: absolute; left: 2px; top: 3px; border-left: 4px solid transparent; border-right: 4px solid transparent; }
.sbtn.up::after { border-bottom: 5px solid #666; }
.sbtn.down::after { border-top: 5px solid #666; }
.sbtn.down { margin-top: auto; }
.sthumb { display: block; height: 24px; margin-top: 17px; background: #fff; border: 1px solid #bdbdbf; }

.editor { flex: 1; min-width: 0; overflow: hidden; padding: 17px 0 0 22px; }
.slide { position: relative; width: 1456px; height: 819px; background: #fff; box-shadow: 0 0 0 1px #d4d4d6; padding: 32px 0 0 52px; color: #5c5f67; }
.watermark { position: absolute; left: 0; top: 0; width: 100%; height: 100%; }
.logo { position: absolute; left: 1264px; top: 37px; width: 146px; height: 56px; }
.logo-mark { display: block; width: 144px; height: 36px; }
.logo-4 { position: absolute; left: 136px; top: 14px; font-family: "Open Sans", sans-serif; font-size: 19px; line-height: 24px; color: #4a96c4; font-weight: 300; }
.logo-url { position: absolute; left: 0; top: 43px; font-family: "Liberation Sans", sans-serif; font-size: 10.500px; line-height: 13px; letter-spacing: 5.400px; color: #4a7f9e; white-space: nowrap; }

.slide-head { position: relative; display: flex; align-items: center; gap: 9px; height: 69px; margin-left: -1px; }
.bar { flex: none; width: 23px; height: 69px; border-radius: 12px; background: linear-gradient(180deg, #3a68e2 0%, #3a8ee6 60%, #2ea6de 100%); }
.slide-head h1 { font-size: 32px; line-height: 44px; letter-spacing: 1.300px; margin-top: 12px; color: #666a72; }
.subtitle { position: relative; margin: 8px 0 0 32px; font-size: 21px; line-height: 30px; letter-spacing: 3.150px; white-space: nowrap; color: #5f6269; }
.cols { position: relative; margin: 64px 0 0 16px; display: grid; grid-template-columns: 404px 464px 1fr; }
.col { min-width: 0; }
.ln { height: 38px; line-height: 38px; white-space: nowrap; font-size: 21px; font-weight: 700; letter-spacing: 3.400px; color: #5c5f67; }
.w { letter-spacing: 4.200px; }
.m1 { margin-top: 1px; }
.m2 { margin-top: 2px; }
.m6 { margin-top: 6px; }
.m8 { margin-top: 8px; }
.m14 { margin-top: 14px; }
.m15 { margin-top: 15px; }
.m17 { margin-top: 17px; }
.m20 { margin-top: 20px; }

.math, .math-in { font-family: "Liberation Serif", "DejaVu Serif", serif; letter-spacing: 3px; font-size: 23px; }
.math { font-weight: 700; }
.math b { font-family: "Noto Sans CJK SC", sans-serif; }
.wide { letter-spacing: 6px; margin-left: 4px; }
.math-in { font-weight: 700; }
sub { font-size: 15px; line-height: 0; vertical-align: -6px; letter-spacing: 3px; }
.thin { font-weight: 400; margin-left: 1px; }
.frac { display: inline-flex; flex-direction: column; vertical-align: middle; text-align: center; font-family: "Liberation Serif", serif; font-size: 16px; line-height: 21px; letter-spacing: 3px; margin: -5px 2px 0; }
.frac .top { border-bottom: 1px solid #666; padding: 0 1px; height: 22px; white-space: nowrap; }
.frac .bot { padding: 0 1px; }
.frac sub { font-size: 13px; vertical-align: -3px; letter-spacing: 2px; }
.frac.num { font-size: 16.500px; letter-spacing: 3px; }
.stack { display: inline-flex; flex-direction: column; vertical-align: middle; line-height: 11px; font-size: 12px; margin-top: -6px; }
.stack sup, .stack sub { font-size: 12px; line-height: 11px; vertical-align: baseline; letter-spacing: 2px; }
.wavy { text-decoration: underline wavy #d04b4b 1px; text-underline-offset: 3px; }

/* Status bar */
.status { flex: none; height: 20px; display: flex; align-items: center; background: #f5f5f6; font-size: 13px; line-height: 20px; color: #555; white-space: nowrap; padding-left: 3px; }
.st-ic { width: 15px; height: 15px; flex: none; }
.st-spell { margin-left: 19px; }
.st-lang { margin-left: 16px; letter-spacing: -.6px; }
.st-acc { margin-left: 17px; }
.st-a11y { margin-left: 3px; letter-spacing: -.6px; }
.st-spacer { flex: 1; }
.st-notes { margin-left: 2px; }
.st-cmt { margin-left: 19px; }
.st-comments { margin-left: 2px; margin-right: 18px; }
.viewbtn { flex: none; width: 40px; height: 20px; display: flex; align-items: center; justify-content: center; }
.viewbtn svg { width: 15px; height: 15px; }
.viewbtn.on { background: #c9c9cb; width: 41px; }
.zoom-minus { flex: none; width: 7px; height: 1px; background: #555; margin: 0 5px 0 10px; }
.slider { position: relative; flex: none; width: 90px; height: 1px; background: #555; }
.knob { position: absolute; left: 47px; top: -5px; width: 5px; height: 11px; background: #666; }

/* Taskbar */
.taskbar { flex: none; height: 40px; display: flex; background: #1c1c1c; color: #eee; overflow: hidden; position: relative; }
.tasks { display: flex; padding-left: 2px; }
.task { position: relative; flex: none; width: 49px; height: 40px; display: flex; align-items: center; justify-content: center; }
.task svg { width: 26px; height: 26px; }
.task.ind::after { content: ""; position: absolute; left: 4px; right: 4px; bottom: 0; height: 2px; background: #7fb3d1; }
.task.ppt { background: #3d3d3d; width: 45px; }
.task.ppt::after { content: ""; position: absolute; left: 0; right: 0; bottom: 0; height: 2px; background: #7fb3d1; }
.ti { font-family: "Liberation Sans", sans-serif; font-weight: 700; text-anchor: middle; }
.ti.acad { font-size: 27px; fill: #c8282c; }
.ti.pc { font-size: 9px; fill: #fff; }
.ti.wb { font-size: 8px; fill: #fff; }
.ti.zy { font-size: 20px; fill: #fff; }
.ti.pp { font-size: 12px; fill: #fff; }
.tray { position: absolute; left: 1355px; top: 0; height: 40px; width: 460px; display: flex; align-items: center; gap: 6px; }
.tr { flex: none; width: 18px; height: 18px; display: flex; align-items: center; justify-content: center; }
.tr svg { width: 18px; height: 18px; }
.tr-text { font-size: 14px; color: #eee; width: 18px; }
.pin { margin-left: 17px; background: #fff; color: #000; font-size: 13px; line-height: 18px; }
.clock { margin-left: 4px; display: flex; flex-direction: column; align-items: flex-end; font-size: 13px; line-height: 20px; color: #eee; width: 52px; flex: none; }
.clock span { white-space: nowrap; }

/* Overlays */
.rec-toolbar { position: absolute; left: 661px; top: 0; width: 406px; height: 40px; background: #040404; display: flex; align-items: center; color: #e6e6e6; font-size: 12.500px; }
.pin-ic { width: 12px; height: 20px; margin-left: 16px; }
.rt-res { margin-left: 24px; font-family: "Liberation Sans", sans-serif; font-size: 13px; width: 62px; }
.rt-sep { width: 1px; height: 24px; background: #1c1c1c; margin-left: 19px; }
.rt-disp { margin-left: 16px; width: 46px; white-space: nowrap; }
.rt-ic { flex: none; width: 14px; height: 16px; }
.crop { margin-left: 25px; }
.pen { margin-left: 21px; }
.rt-sep.s2 { margin-left: 18px; }
.rt-rec { flex: none; width: 56px; height: 24px; margin-left: 12px; border-radius: 12px; background: #5f1a17; color: #8f5f54; text-align: center; line-height: 24px; font-size: 13px; }
.close { width: 11px; height: 12px; margin-left: 19px; }
.cursor { position: absolute; left: 910px; top: 96px; width: 14px; height: 22px; }
```
